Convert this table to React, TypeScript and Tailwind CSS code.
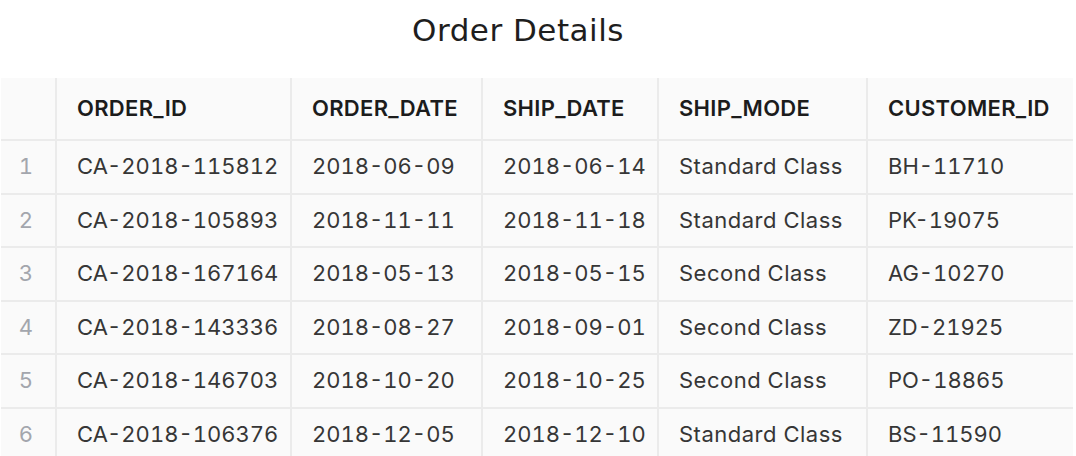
const columns = ['ORDER_ID', 'ORDER_DATE', 'SHIP_DATE', 'SHIP_MODE', 'CUSTOMER_ID'];

const rows = [
  ['CA-2018-115812', '2018-06-09', '2018-06-14', 'Standard Class', 'BH-11710'],
  ['CA-2018-105893', '2018-11-11', '2018-11-18', 'Standard Class', 'PK-19075'],
  ['CA-2018-167164', '2018-05-13', '2018-05-15', 'Second Class', 'AG-10270'],
  ['CA-2018-143336', '2018-08-27', '2018-09-01', 'Second Class', 'ZD-21925'],
  ['CA-2018-146703', '2018-10-20', '2018-10-25', 'Second Class', 'PO-18865'],
  ['CA-2018-106376', '2018-12-05', '2018-12-10', 'Standard Class', 'BS-11590'],
];

const widths = ['w-[55px]', 'w-[235px]', 'w-[191px]', 'w-[176px]', 'w-[209px]', 'w-[206px]'];

export default function App() {
  return (
    <div className="w-[1076px] h-[456px] overflow-hidden bg-white font-['Inter','Liberation_Sans',sans-serif]">
      <h1 className="h-[78px] pt-[10px] pr-[40px] text-center text-[31px] leading-[40px] text-[#1e1e1e] font-['DejaVu_Sans',sans-serif] tracking-[0.5px]">
        Order Details
      </h1>
      <table className="ml-px w-[1072px] table-fixed border-collapse bg-[#fafafa] text-[22px] tabular-nums">
        <thead>
          <tr className="h-[62px]">
            <th className={`${widths[0]} border-r-2 border-b-2 border-[#ebebeb]`} />
            {columns.map((col, i) => (
              <th
                key={col}
                className={`${widths[i + 1]} px-[20px] text-left font-semibold tracking-[0.3px] text-[#1c1c1c] border-b-2 border-[#ebebeb] ${
                  i < columns.length - 1 ? 'border-r-2' : ''
                }`}
              >
                {col}
              </th>
            ))}
          </tr>
        </thead>
        <tbody>
          {rows.map((row, r) => (
            <tr key={row[0]} className="h-[53.5px]">
              <td className="border-r-2 border-b-2 border-[#ebebeb] pr-[4px] text-center text-[#a3a6ad]">{r + 1}</td>
              {row.map((cell, i) => (
                <td
                  key={i}
                  className={`px-[20px] text-[#363636] border-b-2 border-[#ebebeb] whitespace-nowrap overflow-hidden ${
                    i < row.length - 1 ? 'border-r-2' : ''
                  } ${i === 3 ? 'tracking-[0.5px]' : ''}`}
                >
                  {cell}
                </td>
              ))}
            </tr>
          ))}
        </tbody>
      </table>
    </div>
  );
}
